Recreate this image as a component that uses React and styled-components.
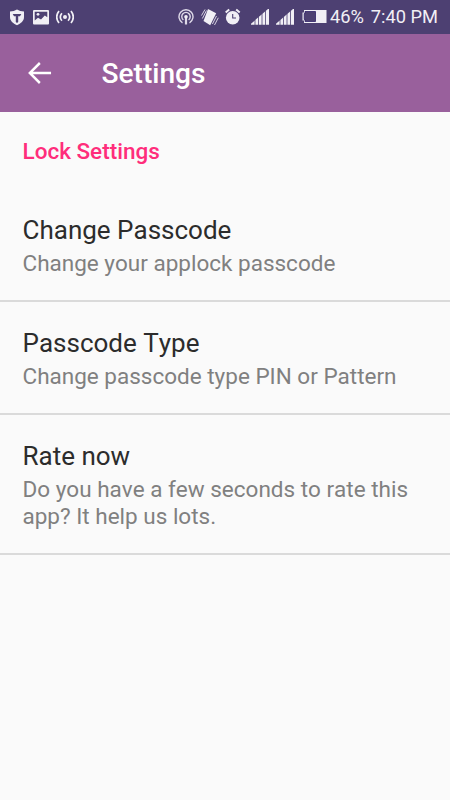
import React from 'react';
import styled, { createGlobalStyle } from 'styled-components';

const GlobalStyle = createGlobalStyle`
  * {
    box-sizing: border-box;
  }

  body {
    margin: 0;
    background: #fafafa;
    font-family: Roboto, "Noto Sans", sans-serif;
    font-kerning: none;
  }
`;

const Screen = styled('div')`
  width: 450px;
  height: 800px;
  display: flex;
  flex-direction: column;
  overflow: hidden;
  background: #fafafa;
`;

const StatusBar = styled('header')`
  height: 34px;
  flex: none;
  display: flex;
  align-items: center;
  justify-content: space-between;
  padding: 0 12px 0 9px;
  background: #4d4072;
  color: #f1eff5;
`;

const StatusGroup = styled('div')`
  display: flex;
  align-items: center;
`;

const StatusIcon = styled('svg')`
  display: block;
  flex: none;
  width: ${props => props.$width}px;
  height: 18px;
  margin-right: ${props => props.$gap || 0}px;
`;

const StatusText = styled('span')`
  width: ${props => props.$width}px;
  font-size: 18.3px;
  line-height: 34px;
  text-align: right;
  white-space: nowrap;
`;

const Toolbar = styled('div')`
  height: 78px;
  flex: none;
  display: flex;
  align-items: center;
  padding-left: 22px;
  background: #99609c;
`;

const BackButton = styled('button')`
  width: 34px;
  height: 34px;
  padding: 0;
  border: none;
  background: transparent;
  color: #fff;

  svg {
    display: block;
  }
`;

const Title = styled('h1')`
  margin: 0 0 0 45.5px;
  padding-top: 2px;
  color: #fff;
  font-size: 28.1px;
  font-weight: 500;
  line-height: 34px;
`;

const Category = styled('h2')`
  height: 77px;
  margin: 0;
  padding: 26px 22.5px 0;
  color: #ff2d7b;
  font-size: 22.5px;
  font-weight: 500;
  line-height: 27px;
`;

const Preference = styled('div')`
  padding: 24.9px 22.5px 23.4px;
  border-bottom: 2px solid #dadada;
`;

const PreferenceTitle = styled('div')`
  margin-bottom: 2.9px;
  color: #2c2c2c;
  font-size: 26px;
  line-height: 33.3px;
`;

const Summary = styled('div')`
  color: #808080;
  font-size: 22.5px;
  line-height: 26.7px;
  white-space: pre-line;
`;

const preferences = [
  { title: 'Change Passcode', summary: 'Change your applock passcode' },
  { title: 'Passcode Type', summary: 'Change passcode type PIN or Pattern' },
  { title: 'Rate now', summary: 'Do you have a few seconds to rate this\napp? It help us lots.' },
];

const ShieldIcon = () => (
  <StatusIcon $width={16} $gap={8} viewBox="0 0 16 18">
    <path d="M8 1.500Q11 3.500 15 3.500V9c0 4-3 6.300-7 8.300C4 15.300 1 13 1 9V3.500Q5 3.500 8 1.500Z" fill="#f1eff5" />
    <path d="M3.700 6h8.600L11 8.300H9.200V14L8 15l-1.200-1V8.300H5Z" fill="#4d4072" />
  </StatusIcon>
);

const ImageIcon = () => (
  <StatusIcon $width={16} $gap={7} viewBox="0 0 16 18">
    <rect x="0" y="2" width="16" height="14.5" rx="1" fill="#f1eff5" />
    <path d="M1.700 3.700h12.600v5.500L11.800 7.500 8 11.500 5 9.800 1.700 12.500Z" fill="#4d4072" />
    <circle cx="5" cy="6.3" r="1.4" fill="#f1eff5" />
  </StatusIcon>
);

const BroadcastIcon = () => (
  <StatusIcon $width={18} viewBox="0 0 18 18" fill="none" stroke="#f1eff5" strokeWidth="1.7">
    <circle cx="9" cy="9" r="2" fill="#f1eff5" stroke="none" />
    <path d="M5.900 5.200q-3.200 3.800 0 7.600M3 3q-4.600 6 0 12M12.100 5.200q3.200 3.800 0 7.600M15 3q4.600 6 0 12" />
  </StatusIcon>
);

const HotspotIcon = () => (
  <StatusIcon $width={16} $gap={7} viewBox="0 0 16 18" fill="none" stroke="#ded9e8" strokeWidth="1.4">
    <path d="M4.500 14.800A7 7 0 1 1 11.500 14.800M5.400 11.900A4.200 4.200 0 1 1 10.600 11.900" />
    <path d="M8 9v7.500" strokeWidth="2.2" />
    <circle cx="8" cy="8.8" r="1.8" fill="#f1eff5" stroke="none" />
  </StatusIcon>
);

const VibrateIcon = () => (
  <StatusIcon $width={18} $gap={6} viewBox="0 0 18 18">
    <path d="M7 1 15.200 5.300 9.200 17.200 2.500 13Z" fill="#f1eff5" />
    <path d="M.5 7.500 4 1.500M1.400 10.500 5.500 2.500M11.400 16 15.500 8M13.500 17 17.300 9.800" stroke="#d9d4e2" strokeWidth="1" />
  </StatusIcon>
);

const AlarmIcon = () => (
  <StatusIcon $width={16} $gap={10} viewBox="0 0 16 18">
    <circle cx="7.7" cy="9.8" r="6.8" fill="#f1eff5" />
    <path d="m.7 4.500 3.500-3M14.700 4.500l-3.500-3" stroke="#f1eff5" strokeWidth="2" />
    <path d="M7.700 6v4H11" fill="none" stroke="#4d4072" strokeWidth="1.1" />
  </StatusIcon>
);

const SignalIcon = ({ gap }) => (
  <StatusIcon $width={18} $gap={gap} viewBox="0 0 18 18">
    <path d="M0 16.700V15.700L17 1h1v15.700Z" fill="#f1eff5" />
    <path d="M4 11.500v5.500M7.500 8.500V17M11 5.500V17M14.500 2.500V17" stroke="#4d4072" strokeWidth=".8" />
  </StatusIcon>
);

const BatteryIcon = () => (
  <StatusIcon $width={25} viewBox="0 0 25 18">
    <path d="M2 2h22.500v13H2v-2.500H.500v-8H2Z" fill="#f1eff5" />
    <path d="M3 3.500h10.500v10H3V11.500H2.200v-6H3Z" fill="#4d4072" stroke="#302168" strokeWidth=".8" />
  </StatusIcon>
);

const App = () => (
  <>
    <GlobalStyle />
    <Screen>
      <StatusBar>
        <StatusGroup>
          <ShieldIcon />
          <ImageIcon />
          <BroadcastIcon />
        </StatusGroup>
        <StatusGroup>
          <HotspotIcon />
          <VibrateIcon />
          <AlarmIcon />
          <SignalIcon gap={7} />
          <SignalIcon gap={8} />
          <BatteryIcon />
          <StatusText $width={37}>46%</StatusText>
          <StatusText $width={74}>7:40 PM</StatusText>
        </StatusGroup>
      </StatusBar>
      <Toolbar>
        <BackButton type="button" aria-label="Back">
          <svg width="34" height="34" viewBox="0 0 24 24" fill="currentColor">
            <path d="M20.500 11.100H7.700l5.500-5.500L12 4.300l-7.700 7.700 7.700 7.700 1.200-1.300L7.700 12.900H20.500z" />
          </svg>
        </BackButton>
        <Title>Settings</Title>
      </Toolbar>
      <Category>Lock Settings</Category>
      {preferences.map(({ title, summary }) => (
        <Preference key={title}>
          <PreferenceTitle>{title}</PreferenceTitle>
          <Summary>{summary}</Summary>
        </Preference>
      ))}
    </Screen>
  </>
);

export default App;
